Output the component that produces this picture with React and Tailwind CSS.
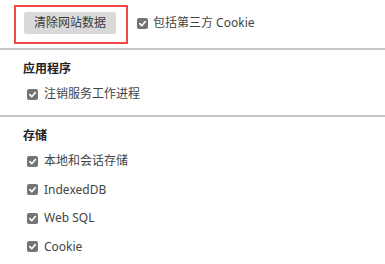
import React from "react";

const font = { fontFamily: '"Noto Sans", "Noto Sans CJK SC", sans-serif' };

function Check() {
  return (
    <span className="flex h-[11px] w-[11px] shrink-0 items-center justify-center rounded-[2px] bg-[#747474]">
      <svg width="9" height="9" viewBox="0 0 10 10">
        <path d="M2 5.2 L4.2 7.4 L8.2 2.8" fill="none" stroke="#fff" strokeWidth="1.8" strokeLinecap="round" strokeLinejoin="round" />
      </svg>
    </span>
  );
}

function Row({ label, className = "" }) {
  return (
    <div className={`flex items-center gap-[6px] pl-[4px] ${className}`}>
      <Check />
      <span className="text-[12px] leading-[16px] text-[#444]">{label}</span>
    </div>
  );
}

export default function App() {
  return (
    <div className="h-[264px] w-[385px] overflow-hidden bg-white" style={font}>
      <div className="flex h-[48px] items-start">
        <div className="ml-[14px] mt-[5px] flex h-[39px] w-[114px] items-start border-2 border-[#f44949] pl-[8px] pt-[5px]">
          <div className="flex h-[22px] w-[92px] items-center justify-center rounded-[2px] bg-[#d9d9d9] text-[12px] text-[#3a3a3a]">
            清除网站数据
          </div>
        </div>
        <div className="ml-[9px] mt-[13px] flex h-[20px] items-center gap-[5px]">
          <Check />
          <span className="text-[12px] leading-[16px] text-[#444]">包括第三方 Cookie</span>
        </div>
      </div>
      <div className="h-[2px] bg-[#c8c8c8]" />
      <div className="pl-[23px]">
        <div className="mt-[11px] text-[12px] font-bold leading-[16px] text-[#222]">应用程序</div>
        <Row label="注销服务工作进程" className="mt-[7px] h-[20px]" />
      </div>
      <div className="mt-[11px] h-[2px] bg-[#c8c8c8]" />
      <div className="pl-[23px]">
        <div className="mt-[11px] text-[12px] font-bold leading-[16px] text-[#222]">存储</div>
        <div className="mt-[3px] flex flex-col">
          <Row label="本地和会话存储" className="h-[28.5px]" />
          <Row label="IndexedDB" className="h-[28.5px]" />
          <Row label="Web SQL" className="h-[28.5px]" />
          <Row label="Cookie" className="h-[28.5px]" />
        </div>
      </div>
    </div>
  );
}
